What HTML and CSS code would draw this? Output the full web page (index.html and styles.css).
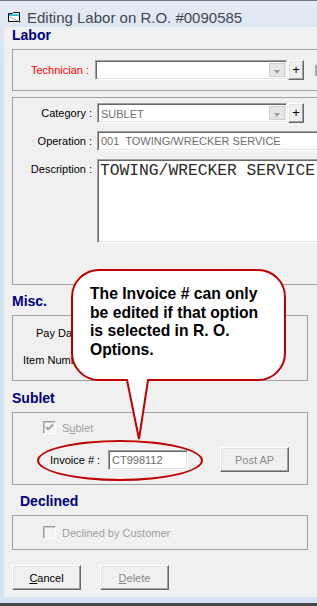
FILE: index.html
```html
<!DOCTYPE html>
<html lang="en">
<head>
  <meta charset="UTF-8" />
  <meta name="viewport" content="width=device-width, initial-scale=1.0"/>
  <title>Editing Labor on R.O. #0090585</title>
  <link rel="stylesheet" href="styles.css">
</head>
<body>
  <div class="window">
    <div class="titlebar">
      <svg class="app-icon" width="15" height="12" viewBox="0 0 15 12">
        <path d="M1.5 2.5h4l1-1h6v9h-11z" fill="#fff" stroke="#000"/>
        <rect x="2" y="3" width="10" height="2" fill="#2ec4d6"/>
        <path d="M3 6l8 4" stroke="#9aa" stroke-width="1"/>
        <path d="M12 9l2 1.5-2 1.5z" fill="#555"/>
      </svg>
      <span class="title">Editing Labor on R.O. #0090585</span>
    </div>

    <div class="client">
      <h2 class="sec-title">Labor</h2>
      <div class="group group-tech">
        <div class="row">
          <span class="lbl lbl-tech">Technician :</span>
          <div class="combo combo-tech"><span class="combo-value"></span><span class="combo-btn"></span></div>
          <button class="btn btn-plus">+</button>
          <span class="cut-edge"></span>
        </div>
      </div>

      <div class="group group-job">
        <div class="row">
          <span class="lbl">Category :</span>
          <div class="combo combo-cat"><span class="combo-value">SUBLET</span><span class="combo-btn"></span></div>
          <button class="btn btn-plus">+</button>
        </div>
        <div class="row">
          <span class="lbl">Operation :</span>
          <div class="field field-op">001  TOWING/WRECKER SERVICE</div>
        </div>
        <div class="row row-top">
          <span class="lbl">Description :</span>
          <div class="memo">TOWING/WRECKER SERVICE</div>
        </div>
      </div>

      <h2 class="sec-title sec-misc">Misc.</h2>
      <div class="group group-misc">
        <div class="row">
          <span class="lbl-left lbl-pay">Pay Date :</span>
          <div class="field field-short"></div>
        </div>
        <div class="row">
          <span class="lbl-left lbl-item">Item Number :</span>
          <div class="field field-short"></div>
        </div>
      </div>

      <h2 class="sec-title sec-sublet">Sublet</h2>
      <div class="group group-sublet">
        <div class="check-row">
          <span class="checkbox">
            <svg width="11" height="11" viewBox="0 0 11 11"><path d="M2 5l2.2 2.4L9 2.5" fill="none" stroke="#a0a0a0" stroke-width="2"/></svg>
          </span>
          <span class="check-label">S<u>u</u>blet</span>
        </div>
        <div class="invoice-row">
          <span class="lbl-invoice">Invoice # :</span>
          <div class="field field-invoice">CT998112</div>
          <button class="btn btn-post">Post AP</button>
        </div>
      </div>

      <h2 class="sec-title sec-declined">Declined</h2>
      <div class="group group-declined">
        <div class="check-row">
          <span class="checkbox"></span>
          <span class="check-label">Declined by Customer</span>
        </div>
      </div>

      <div class="actions">
        <button class="btn btn-action"><u>C</u>ancel</button>
        <button class="btn btn-action btn-disabled"><u>D</u>elete</button>
      </div>
    </div>
  </div>

  <div class="mark-ring"></div>

  <div class="callout">
    <svg width="218" height="176" viewBox="0 0 218 176">
      <path d="M29 2H188A27 27 0 0 1 215 29V85A27 27 0 0 1 188 112H78L69 171L57 112H29A27 27 0 0 1 2 85V29A27 27 0 0 1 29 2Z" fill="#fff" stroke="#c00000" stroke-width="2"/>
    </svg>
    <div class="callout-text">The Invoice # can only<br>be edited if that option<br>is selected in R. O.<br>Options.</div>
  </div>
</body>
</html>
```

FILE: styles.css
```css
body {
  margin: 0;
  position: relative;
  width: 317px;
  height: 606px;
  overflow: hidden;
  font-family: "Liberation Sans", Arial, sans-serif;
  font-size: 11px;
  color: #000;
  background: #d8e4f2;
}
.window {
  width: 420px;
  height: 606px;
  box-sizing: border-box;
  border-top: 1px solid #6f7780;
  border-bottom: 3px solid #474747;
  background: linear-gradient(#e4ebf4, #d6e3f2 60px);
}
.titlebar {
  height: 26px;
  box-sizing: border-box;
  display: flex;
  align-items: flex-start;
  padding: 8px 0 0 7px;
}
.app-icon { margin-top: 2px; }
.title {
  margin-left: 5px;
  font-size: 15px;
  line-height: 17px;
  color: #3f4852;
}
.client {
  margin-left: 4px;
  height: 570px;
  box-sizing: border-box;
  padding-left: 8px;
  background: #f0f0f0;
}
.sec-title {
  margin: 0;
  font-size: 14px;
  line-height: 17px;
  font-weight: bold;
  color: #000080;
}
.sec-misc { margin-top: 8px; }
.sec-sublet { margin-top: 9px; }
.sec-declined { margin-top: 8px; padding-left: 8px; }

.group {
  box-sizing: border-box;
  border: 1px solid #a0a0a0;
  margin-top: 5px;
}
.group-tech { height: 42px; padding-top: 10px; }
.group-job { height: 188px; margin-top: 6px; padding-top: 5px; }
.group-misc { width: 296px; height: 66px; padding-top: 7px; }
.group-sublet { width: 296px; height: 73px; padding-top: 8px; }
.group-declined { width: 296px; height: 35px; padding-top: 10px; }

.row {
  display: flex;
  align-items: center;
  height: 20px;
}
.row + .row { margin-top: 8px; }
.group-misc .row + .row { margin-top: 7px; }
.row-top { align-items: flex-start; height: auto; }
.row-top .lbl { padding-top: 4px; }

.lbl {
  width: 79px;
  margin-right: 5px;
  text-align: right;
  white-space: nowrap;
}
.lbl-tech { width: 76px; margin-right: 6px; color: #f00; }
.lbl-left { white-space: nowrap; width: 84px; }
.lbl-pay { padding-left: 23px; width: 61px; }
.lbl-item { padding-left: 10px; width: 74px; }

/* sunken controls */
.combo, .field, .memo {
  box-sizing: border-box;
  background: #fff;
  border: 1px solid;
  border-color: #a0a0a0 #fff #fff #a0a0a0;
  box-shadow: inset 1px 1px 0 #696969, inset -1px -1px 0 #e3e3e3;
}
.combo {
  display: flex;
  height: 20px;
  padding: 2px 1px 2px 2px;
}
.combo-tech { width: 192px; }
.combo-cat { width: 190px; }
.combo-value {
  flex: 1;
  padding-left: 1px;
  line-height: 16px;
  color: #6d6d6d;
}
.combo-btn {
  position: relative;
  width: 16px;
  box-sizing: border-box;
  border: 1px solid #cfcfcf;
  background: #e6e6e6;
}
.combo-btn::after {
  content: "";
  position: absolute;
  left: 4px;
  top: 6px;
  border-left: 3.5px solid transparent;
  border-right: 3.5px solid transparent;
  border-top: 4px solid #a0a0a0;
}
.field {
  height: 20px;
  padding-left: 3px;
  line-height: 18px;
  color: #6d6d6d;
  white-space: pre;
}
.field-op { width: 300px; }
.field-short { width: 100px; }
.memo {
  width: 300px;
  height: 84px;
  padding: 2px 0 0 2px;
  font-family: "Liberation Mono", "Courier New", monospace;
  font-size: 16.3px;
  line-height: 18px;
  color: #2a2a2a;
  white-space: pre;
}

/* raised buttons */
.btn {
  box-sizing: border-box;
  margin: 0;
  padding: 0;
  font-family: "Liberation Sans", Arial, sans-serif;
  font-size: 11px;
  color: #000;
  background: #f0f0f0;
  border: 1px solid;
  border-color: #fff #696969 #696969 #fff;
  box-shadow: inset -1px -1px 0 #a0a0a0, inset 1px 1px 0 #e3e3e3;
  border-radius: 0;
}
.btn-plus {
  width: 16px;
  height: 20px;
  margin-left: 1px;
  font-size: 13px;
  line-height: 16px;
}
.cut-edge {
  width: 2px;
  height: 11px;
  margin-left: 11px;
  background: #a8a8a8;
}

.check-row {
  display: flex;
  align-items: center;
  height: 13px;
  padding-left: 30px;
}
.checkbox {
  width: 13px;
  height: 13px;
  box-sizing: border-box;
  display: flex;
  align-items: center;
  justify-content: center;
  background: #f4f4f4;
  border: 1px solid;
  border-color: #a0a0a0 #fff #fff #a0a0a0;
  box-shadow: inset 1px 1px 0 #c8c8c8;
}
.check-label {
  margin-left: 6px;
  color: #a0a0a0;
}
.invoice-row {
  display: flex;
  align-items: center;
  height: 25px;
  margin-top: 13px;
  padding-left: 37px;
}
.lbl-invoice { width: 50px; white-space: nowrap; }
.field-invoice { width: 80px; margin-left: 8px; padding-left: 3px; }
.btn-post {
  width: 69px;
  height: 25px;
  margin-left: 32px;
  color: #8a8a8a;
}

.actions {
  display: flex;
  gap: 19px;
  margin-top: 15px;
}
.btn-action { width: 69px; height: 25px; }
.btn-disabled { color: #8a8a8a; }

/* annotation overlay */
.mark-ring {
  position: absolute;
  left: 37px;
  top: 440px;
  width: 166px;
  height: 41px;
  box-sizing: border-box;
  border: 2px solid #c00000;
  border-radius: 50%;
}
.callout {
  position: absolute;
  left: 70px;
  top: 268px;
  width: 218px;
  height: 176px;
}
.callout svg { position: absolute; left: 0; top: 0; }
.callout-text {
  position: absolute;
  left: 20px;
  top: 17px;
  width: 195px;
  font-size: 15.7px;
  line-height: 18.5px;
  font-weight: bold;
  white-space: nowrap;
}
```
